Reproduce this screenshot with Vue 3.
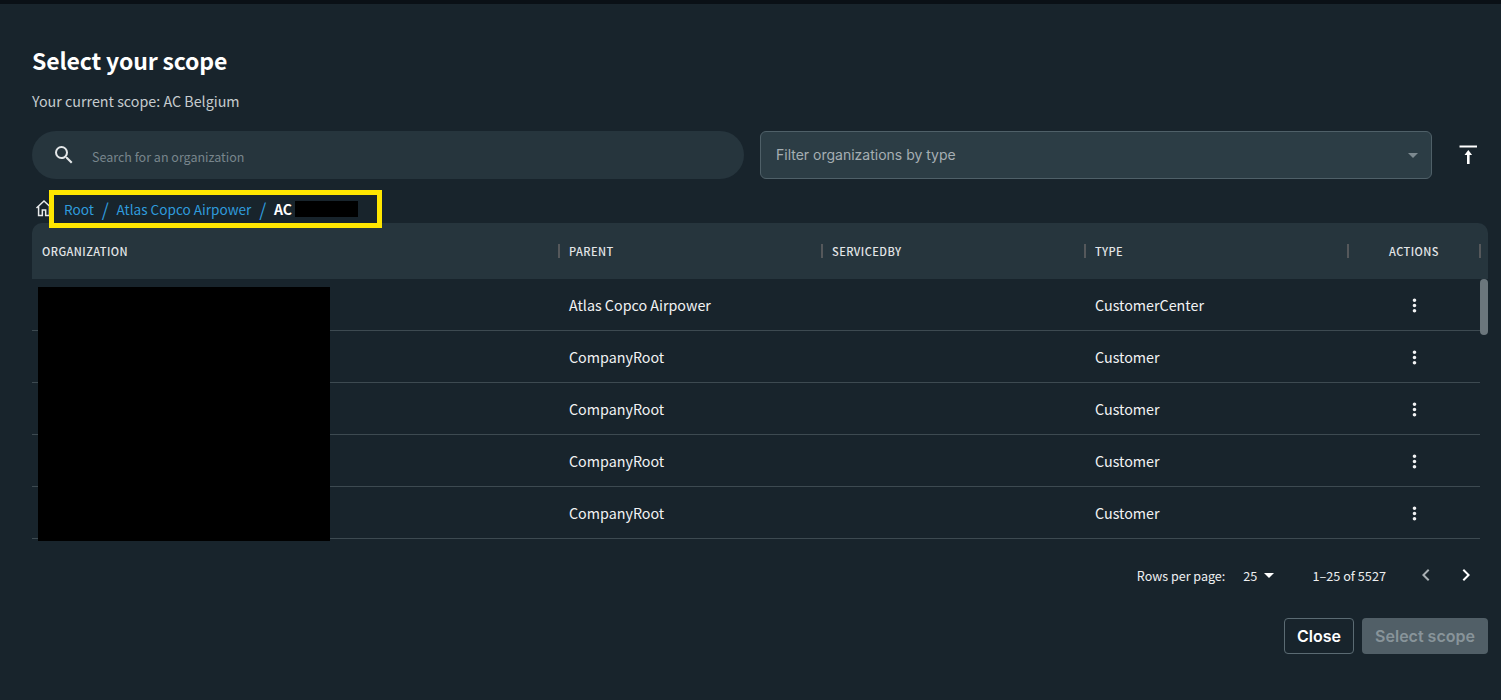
<script setup>
const columns = [
  { label: 'ORGANIZATION', cls: '' },
  { label: 'PARENT', cls: '' },
  { label: 'SERVICEDBY', cls: '' },
  { label: 'TYPE', cls: '' },
  { label: 'ACTIONS', cls: 'center' }
]
const rows = [
  { parent: 'Atlas Copco Airpower', type: 'CustomerCenter' },
  { parent: 'CompanyRoot', type: 'Customer' },
  { parent: 'CompanyRoot', type: 'Customer' },
  { parent: 'CompanyRoot', type: 'Customer' },
  { parent: 'CompanyRoot', type: 'Customer' }
]
</script>

<template>
  <div class="page">
    <div class="topbar"></div>
    <main class="dialog">
      <h1 class="title">Select your scope</h1>
      <p class="current">Your current scope: AC Belgium</p>

      <div class="controls">
        <div class="search">
          <svg class="search-icon" width="24" height="24" viewBox="0 0 24 24" fill="currentColor">
            <path d="M15.5 14h-.79l-.28-.27A6.47 6.47 0 0 0 16 9.5 6.5 6.5 0 1 0 9.5 16c1.61 0 3.09-.59 4.23-1.57l.27.28v.79l5 4.99L20.49 19l-4.99-5zm-6 0C7.01 14 5 11.99 5 9.5S7.01 5 9.5 5 14 7.01 14 9.5 11.99 14 9.5 14z"/>
          </svg>
          <span class="search-text">Search for an organization</span>
        </div>
        <div class="filter">
          <span class="filter-text">Filter organizations by type</span>
          <span class="filter-caret"></span>
        </div>
        <button class="collapse" aria-label="Collapse">
          <svg width="24" height="24" viewBox="0 0 24 24" fill="currentColor">
            <path d="M3.500 2.500h17.500v2H3.500z"/>
            <path d="M12.300 7 8.500 12H11v9h2.600v-9h2.500z"/>
          </svg>
        </button>
      </div>

      <nav class="crumbs">
        <svg class="home" width="20" height="20" viewBox="0 0 24 24" fill="none" stroke="currentColor" stroke-width="1.800">
          <path d="M3 12 12 3.500 21 12M5.500 10v11H10v-6.500h4V21h4.500V10"/>
        </svg>
        <a class="crumb">Root</a>
        <span class="sep">/</span>
        <a class="crumb">Atlas Copco Airpower</a>
        <span class="sep">/</span>
        <strong class="crumb-current">AC</strong>
        <span class="crumb-redact"></span>
        <span class="highlight"></span>
      </nav>

      <section class="table">
        <div class="thead">
          <div v-for="c in columns" :key="c.label" class="th" :class="c.cls">
            <span>{{ c.label }}</span>
          </div>
        </div>
        <div class="tbody">
          <div v-for="(r, i) in rows" :key="i" class="tr">
            <div class="td"></div>
            <div class="td">{{ r.parent }}</div>
            <div class="td"></div>
            <div class="td">{{ r.type }}</div>
            <div class="td center">
              <svg class="dots" width="21" height="21" viewBox="0 0 24 24" fill="currentColor">
                <path d="M12 8c1.100 0 2-.9 2-2s-.9-2-2-2-2 .9-2 2 .9 2 2 2zm0 2c-1.100 0-2 .9-2 2s.9 2 2 2 2-.9 2-2-.9-2-2-2zm0 6c-1.100 0-2 .9-2 2s.9 2 2 2 2-.9 2-2-.9-2-2-2z"/>
              </svg>
            </div>
          </div>
          <div class="thumb"></div>
          <div class="redact"></div>
        </div>
      </section>

      <div class="pager">
        <span class="rpp">Rows per page:</span>
        <span class="rpp-value">25</span>
        <span class="rpp-caret"></span>
        <span class="range">1–25 of 5527</span>
        <svg class="prev" width="24" height="24" viewBox="0 0 24 24" fill="currentColor">
          <path d="M15.410 7.410 14 6l-6 6 6 6 1.410-1.410L10.830 12z"/>
        </svg>
        <svg class="next" width="24" height="24" viewBox="0 0 24 24" fill="currentColor">
          <path d="M10 6 8.590 7.410 13.170 12l-4.580 4.590L10 18l6-6z"/>
        </svg>
      </div>

      <div class="actions">
        <button class="btn btn-close">Close</button>
        <button class="btn btn-select">Select scope</button>
      </div>
    </main>
  </div>
</template>

<style>
html, body { margin: 0; background: #18242c; }
</style>

<style scoped>
.page {
  height: 700px;
  overflow: hidden;
  background: #18242c;
  color: #fff;
  font-family: "Noto Sans CJK JP", "Noto Sans", sans-serif;
}
.topbar { height: 4px; background: #0a1016; }
.dialog { padding: 0 13px 0 32px; }
.title {
  margin: 0;
  padding-top: 38px;
  font-size: 23px;
  letter-spacing: -0.15px;
  line-height: 36px;
  font-weight: 700;
}
.current {
  margin: 13px 0 0;
  font-size: 14.3px;
  line-height: 20px;
  color: #c6cccf;
}
.controls { display: flex; margin-top: 20px; align-items: flex-start; }
.search {
  width: 712px;
  height: 48px;
  border-radius: 24px;
  background: #26353d;
  display: flex;
  align-items: center;
  padding-left: 20px;
  box-sizing: border-box;
}
.search-icon { color: #e4e7e9; flex: none; }
.search-text {
  margin-left: 16px;
  font-size: 12.5px;
  color: #78858c;
  position: relative;
  top: 1px;
}
.filter {
  margin-left: 16px;
  width: 672px;
  height: 48px;
  box-sizing: border-box;
  background: #2c3d45;
  border: 1px solid #4f6068;
  border-radius: 6px;
  display: flex;
  align-items: center;
  justify-content: space-between;
  padding: 0 13px 0 15px;
  font-family: Inter, sans-serif;
  font-size: 14px;
  color: #a6afb3;
}
.filter-text { position: relative; top: -1px; }
.filter-caret {
  border-left: 5px solid transparent;
  border-right: 5px solid transparent;
  border-top: 5px solid #7d8a90;
  margin-top: 1px;
}
.collapse {
  margin-left: 24px;
  width: 24px;
  height: 24px;
  padding: 0;
  margin-top: 12px;
  background: none;
  border: 0;
  color: #fff;
}
.crumbs {
  position: relative;
  display: flex;
  align-items: center;
  height: 44px;
  box-sizing: border-box;
  padding-top: 16px;
  font-size: 13.6px;
}
.home { color: #e8eaeb; margin-left: 2px; margin-right: 10px; flex: none; position: relative; top: -1px; }
.crumb { color: #2f9bdc; }
.sep { color: #2f9bdc; margin: 0 7.8px; font-size: 18px; font-weight: 400; line-height: 20px; }
.crumb-current { font-weight: 700; font-size: 14px; }
.crumb-redact {
  margin-left: 3px;
  width: 63px;
  height: 16px;
  background: #000;
}
.highlight {
  position: absolute;
  z-index: 2;
  left: 17px;
  top: 11px;
  width: 333px;
  height: 38px;
  box-sizing: border-box;
  border: 5px solid #ffe600;
}
.table { position: relative; }
.thead {
  display: grid;
  grid-template-columns: 528px 263px 263px 263px 132px;
  height: 56px;
  background: #26353d;
  border-radius: 10px 10px 0 0;
  padding-right: 8px;
}
.th {
  display: flex;
  align-items: center;
  padding: 0 0 1px 9px;
  font-size: 11px;
  font-weight: 500;
  letter-spacing: .45px;
  color: #e3e6e8;
  position: relative;
}
.th:first-child { padding-left: 10px; }
.th::after {
  content: "";
  position: absolute;
  right: 0;
  top: 21px;
  height: 14px;
  width: 2px;
  background: #55585b;
}
.th.center { justify-content: center; padding: 0 2px 1px 0; }
.tbody { position: relative; height: 262px; overflow: hidden; }
.tr {
  display: grid;
  grid-template-columns: 528px 263px 263px 263px 132px;
  height: 52px;
  box-sizing: border-box;
  border-bottom: 1px solid #3d4a51;
  margin-right: 8px;
}
.td {
  display: flex;
  align-items: center;
  padding-left: 9px;
  font-size: 14.3px;
  font-weight: 400;
  color: #f2f3f4;
}
.td.center { justify-content: center; padding: 1px 2px 0 0; }
.thumb {
  position: absolute;
  right: 0;
  top: 0;
  width: 8px;
  height: 56px;
  border-radius: 4px;
  background: #6b767c;
}
.redact {
  position: absolute;
  left: 6px;
  top: 8px;
  width: 292px;
  height: 254px;
  background: #000;
}
.pager {
  display: flex;
  align-items: center;
  justify-content: flex-end;
  height: 36px;
  margin-top: 16px;
  font-size: 12.7px;
  color: #eef0f1;
  padding-right: 10px;
}
.rpp { font-size: 12.55px; }
.rpp-value { margin-left: 18px; }
.rpp-caret {
  margin-left: 7px;
  border-left: 5px solid transparent;
  border-right: 5px solid transparent;
  border-top: 5px solid #fff;
}
.range { margin-left: 38px; margin-right: 28px; }
.prev { color: #a9b0b4; margin-right: 16px; }
.next { color: #fff; }
.actions {
  display: flex;
  justify-content: flex-end;
  gap: 8px;
  margin-top: 25px;
}
.btn {
  height: 36px;
  border-radius: 4px;
  font-family: Inter, sans-serif;
  font-size: 16px;
  font-weight: 600;
  padding: 0;
}
.btn-close {
  width: 70px;
  background: transparent;
  border: 1px solid #5b6b73;
  color: #fff;
}
.btn-select {
  width: 126px;
  background: #515f67;
  border: 0;
  color: #88949a;
}
</style>
